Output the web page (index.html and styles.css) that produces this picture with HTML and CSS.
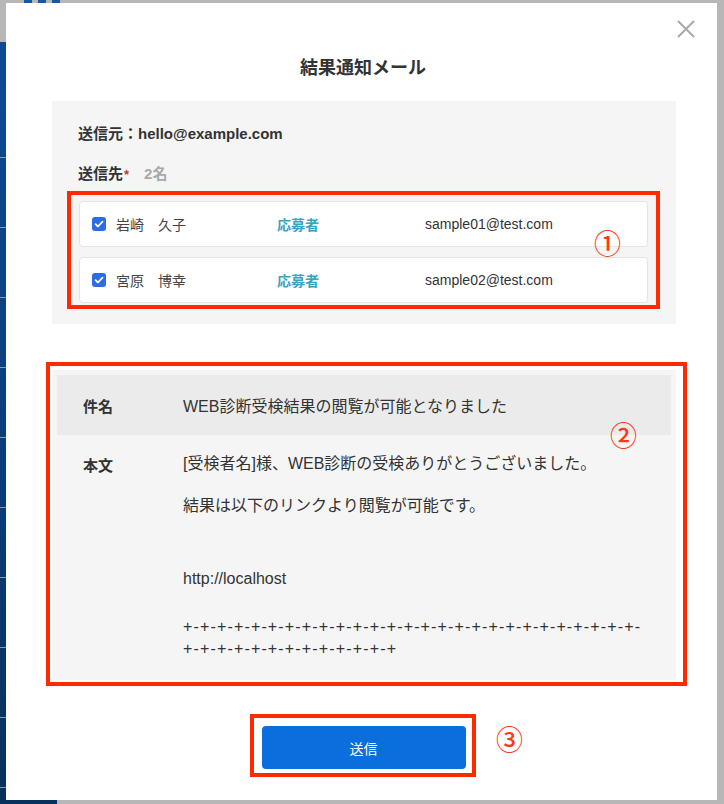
FILE: index.html
```html
<!DOCTYPE html>
<html lang="ja">
<head>
<meta charset="utf-8">
<title>結果通知メール</title>
<link rel="stylesheet" href="styles.css">
</head>
<body>
<div class="page-side"></div>
<div class="page-logo"><span></span><span></span><span></span></div>
<div class="modal">
  <button class="close" aria-label="閉じる">
    <svg width="20" height="20" viewBox="0 0 20 20"><path d="M2 2 L18 18 M18 2 L2 18" stroke="#a9a9a9" stroke-width="2" fill="none"/></svg>
  </button>
  <h1 class="title">結果通知メール</h1>

  <section class="panel">
    <div class="from">送信元：hello@example.com</div>
    <div class="to">送信先<span class="req">*</span><span class="count">2名</span></div>
    <ul class="recipients">
      <li class="recipient">
        <span class="who"><span class="check"><svg width="14" height="14" viewBox="0 0 14 14"><path d="M3.6 7.2 L6 9.5 L10.5 4.6" stroke="#fff" stroke-width="1.8" fill="none" stroke-linecap="round" stroke-linejoin="round"/></svg></span><span class="name">岩崎　久子</span></span>
        <span class="role">応募者</span>
        <span class="email">sample01@test.com</span>
      </li>
      <li class="recipient">
        <span class="who"><span class="check"><svg width="14" height="14" viewBox="0 0 14 14"><path d="M3.6 7.2 L6 9.5 L10.5 4.6" stroke="#fff" stroke-width="1.8" fill="none" stroke-linecap="round" stroke-linejoin="round"/></svg></span><span class="name">宮原　博幸</span></span>
        <span class="role">応募者</span>
        <span class="email">sample02@test.com</span>
      </li>
    </ul>
  </section>

  <section class="mail">
    <div class="mail-row subject">
      <div class="label">件名</div>
      <div class="value">WEB診断受検結果の閲覧が可能となりました</div>
    </div>
    <div class="mail-row body">
      <div class="label label-body">本文</div>
      <div class="value">
        <p class="line">[受検者名]様、WEB診断の受検ありがとうございました。</p>
        <p class="line gap1">結果は以下のリンクより閲覧が可能です。</p>
        <p class="line gap2">http://localhost</p>
        <p class="line gap3 rule">+-+-+-+-+-+-+-+-+-+-+-+-+-+-+-+-+-+-+-+-+-+-+-+-+-+-+-<br>+-+-+-+-+-+-+-+-+-+-+-+-+</p>
      </div>
    </div>
  </section>

  <div class="actions">
    <button class="send">送信</button>
  </div>

  <div class="mark mark-1"></div>
  <div class="num num-1">①</div>
  <div class="mark mark-2"></div>
  <div class="num num-2">②</div>
  <div class="mark mark-3"></div>
  <div class="num num-3">③</div>
</div>
</body>
</html>
```

FILE: styles.css
```css
* { box-sizing: border-box; }

html, body {
  margin: 0;
  padding: 0;
}

body {
  width: 724px;
  height: 804px;
  overflow: hidden;
  background: #b7b7b7;
  font-family: "Liberation Sans", "Noto Sans CJK JP", sans-serif;
  color: #333;
  position: relative;
}

.page-side {
  position: absolute;
  left: 0;
  top: 42px;
  width: 57px;
  bottom: 0;
  background:
    repeating-linear-gradient(to bottom, transparent 0, transparent 69px, #8a9bb0 69px, #8a9bb0 70px) 0 46px / 100% 100% no-repeat,
    linear-gradient(to bottom, #0c4b93, #0a3f7c 50%, #08305d);
}

.page-logo {
  position: absolute;
  left: 24px;
  top: 0;
  display: flex;
  gap: 6px;
}
.page-logo span {
  width: 8px;
  height: 3px;
  background: #1a56a8;
}

.modal {
  position: relative;
  z-index: 1;
  width: 711px;
  height: 797px;
  margin: 3px 0 0 6px;
  background: #fff;
  padding-top: 52px;
}

.close {
  position: absolute;
  right: 19px;
  top: 14px;
  width: 24px;
  height: 24px;
  padding: 2px;
  border: 0;
  background: none;
  display: flex;
  align-items: center;
  justify-content: center;
}

.title {
  margin: 0;
  text-align: center;
  font-size: 18px;
  line-height: 26px;
  font-weight: bold;
  color: #333;
  padding-left: 3px;
}

.panel {
  margin: 20px 41px 0 46px;
  background: #f5f5f5;
  padding: 22px 28px 21px 26px;
}

.from, .to {
  font-size: 15px;
  line-height: 22px;
  font-weight: bold;
  color: #333;
}

.to {
  margin-top: 18px;
  display: flex;
  align-items: baseline;
}

.req {
  color: #c0392b;
  font-size: 13px;
  margin-left: 1px;
}

.count {
  color: #a9a9a9;
  margin-left: 15px;
}

.recipients {
  list-style: none;
  margin: 15px 0 0 1px;
  padding: 0;
  display: flex;
  flex-direction: column;
  gap: 10px;
}

.recipient {
  height: 46px;
  background: #fff;
  border: 1px solid #e4e4e4;
  border-radius: 4px;
  display: grid;
  grid-template-columns: 185px 148px 1fr;
  align-items: center;
  padding-left: 12px;
  font-size: 14px;
}

.who {
  display: flex;
  align-items: center;
  gap: 10px;
}

.check {
  width: 14px;
  height: 14px;
  border-radius: 3px;
  background: #2b6de6;
  display: flex;
}

.name {
  color: #444;
}

.role {
  color: #36a6c2;
  font-weight: bold;
}

.email {
  color: #333;
  font-size: 14px;
}

.mail {
  margin: 46px 41px 0 46px;
  background: #f5f5f5;
  padding: 5px;
  height: 310px;
  display: flex;
  flex-direction: column;
}

.mail-row {
  display: flex;
  padding-left: 26px;
}

.label {
  width: 100px;
  flex: none;
  font-size: 15px;
  font-weight: bold;
  color: #333;
}

.value {
  font-size: 16px;
  color: #333;
}

.subject {
  height: 60px;
  background: #ebebeb;
  align-items: center;
}

.body {
  flex: 1;
  padding-top: 18px;
  align-items: flex-start;
}

.label-body {
  line-height: 22px;
  padding-top: 2px;
}

.line {
  margin: 0;
  line-height: 22px;
}

.gap1 { margin-top: 20px; }
.gap2 { margin-top: 51px; }
.gap3 { margin-top: 26px; }

.rule {
  white-space: nowrap;
  letter-spacing: 1.15px;
}

.actions {
  display: flex;
  justify-content: center;
  margin-top: 46px;
  padding-left: 4px;
}

.send {
  width: 204px;
  height: 43px;
  border: 0;
  border-radius: 4px;
  background: #0a6edd;
  color: #fff;
  font-family: "Liberation Sans", "Noto Sans CJK JP", sans-serif;
  font-size: 14px;
}

.mark {
  position: absolute;
  border: 4px solid #ff2a00;
}

.mark-1 { left: 61px; top: 188px; width: 593px; height: 118px; }
.mark-2 { left: 40px; top: 359px; width: 641px; height: 324px; }
.mark-3 { left: 244px; top: 711px; width: 226px; height: 63px; }

.num {
  position: absolute;
  color: #ff3a1a;
  font-family: "Noto Sans CJK JP", sans-serif;
  font-size: 27px;
  line-height: 1;
  font-weight: 500;
}

.num-1 { left: 588px; top: 226px; }
.num-2 { left: 604px; top: 418px; }
.num-3 { left: 490px; top: 722px; }
```
